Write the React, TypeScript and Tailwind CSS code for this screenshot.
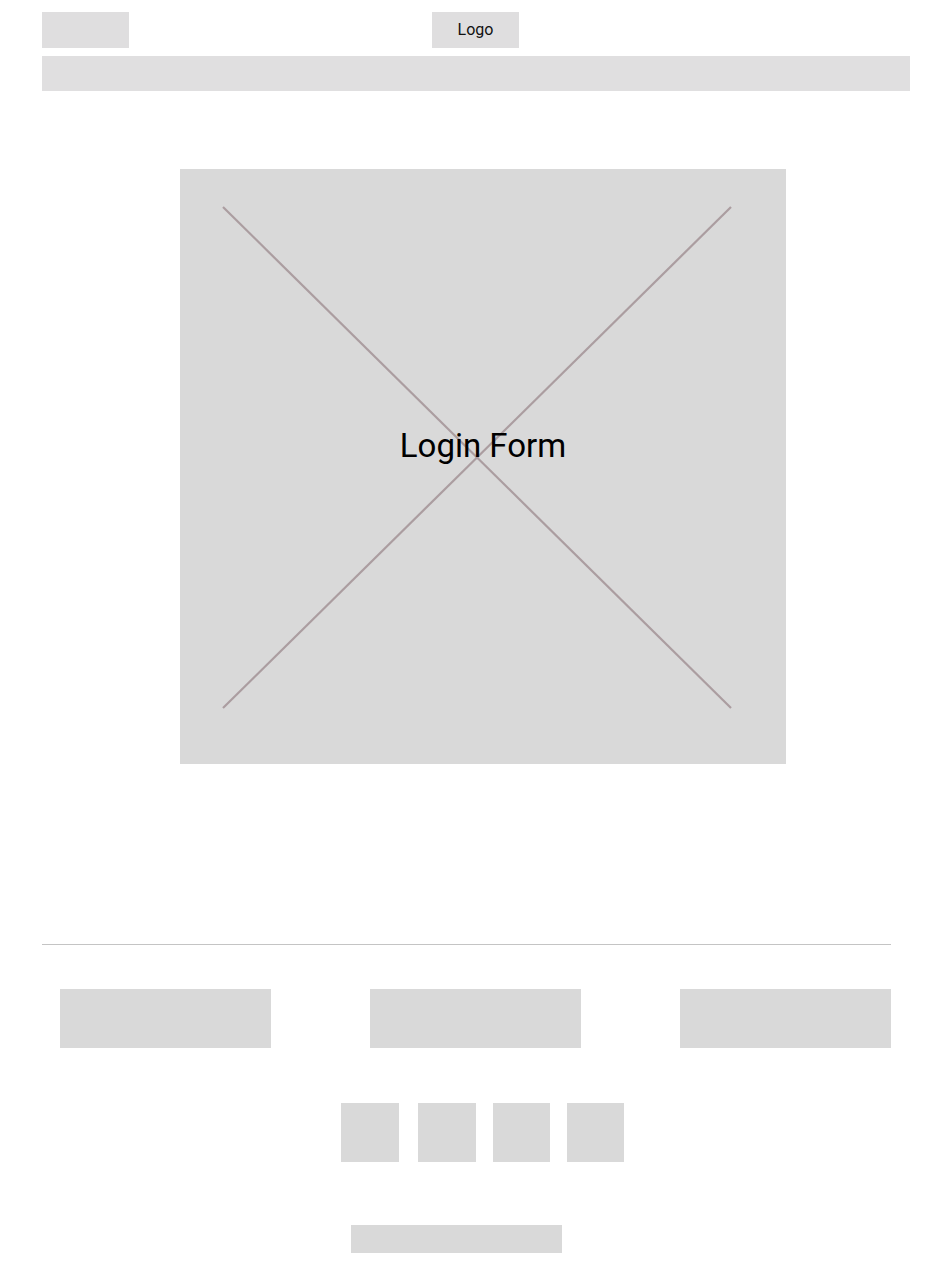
import React from 'react';

const FooterBox: React.FC = () => <div className="w-[211px] h-[59px] bg-[#d9d9d9]" />;

const App: React.FC = () => {
  return (
    <div className="w-[951px] min-h-[1280px] bg-white font-['Roboto','Liberation_Sans',sans-serif] text-black">
      {/* header */}
      <header className="px-[42px] pt-3">
        <div className="flex items-center w-[868px]">
          <div className="w-[87px] h-[36px] bg-[#dfdedf]" />
          <div className="ml-[303px] w-[87px] h-[36px] bg-[#dfdedf] flex items-center justify-center text-[16px] text-[#111]">
            Logo
          </div>
        </div>
        <nav className="mt-2 w-[868px] h-[35px] bg-[#e0dfe0]" />
      </header>

      {/* login placeholder */}
      <main className="pt-[78px] pl-[180px]">
        <div className="relative w-[606px] h-[595px] bg-[#d9d9d9] flex justify-center pt-[258px]">
          <svg className="absolute inset-0" width="606" height="595" viewBox="0 0 606 595">
            <line x1="43" y1="38" x2="551" y2="539" stroke="#ab9da0" strokeWidth="2.2" />
            <line x1="551" y1="38" x2="43" y2="539" stroke="#ab9da0" strokeWidth="2.2" />
          </svg>
          <span className="relative text-[33px] leading-[38px] h-[38px]">Login Form</span>
        </div>
      </main>

      {/* footer */}
      <footer className="pt-[180px] pl-[42px]">
        <div className="w-[849px] h-px bg-[#c4c4c4]" />
        <div className="mt-[44px] pl-[18px] w-[849px] flex justify-between">
          <FooterBox />
          <FooterBox />
          <FooterBox />
        </div>
        <div className="mt-[55px] ml-[299px] flex">
          <div className="w-[58px] h-[59px] bg-[#d9d9d9]" />
          <div className="ml-[19px] w-[58px] h-[59px] bg-[#d9d9d9]" />
          <div className="ml-[17px] w-[57px] h-[59px] bg-[#d9d9d9]" />
          <div className="ml-[17px] w-[57px] h-[59px] bg-[#d9d9d9]" />
        </div>
        <div className="mt-[63px] ml-[309px] w-[211px] h-[28px] bg-[#d9d9d9]" />
      </footer>
    </div>
  );
};

export default App;
